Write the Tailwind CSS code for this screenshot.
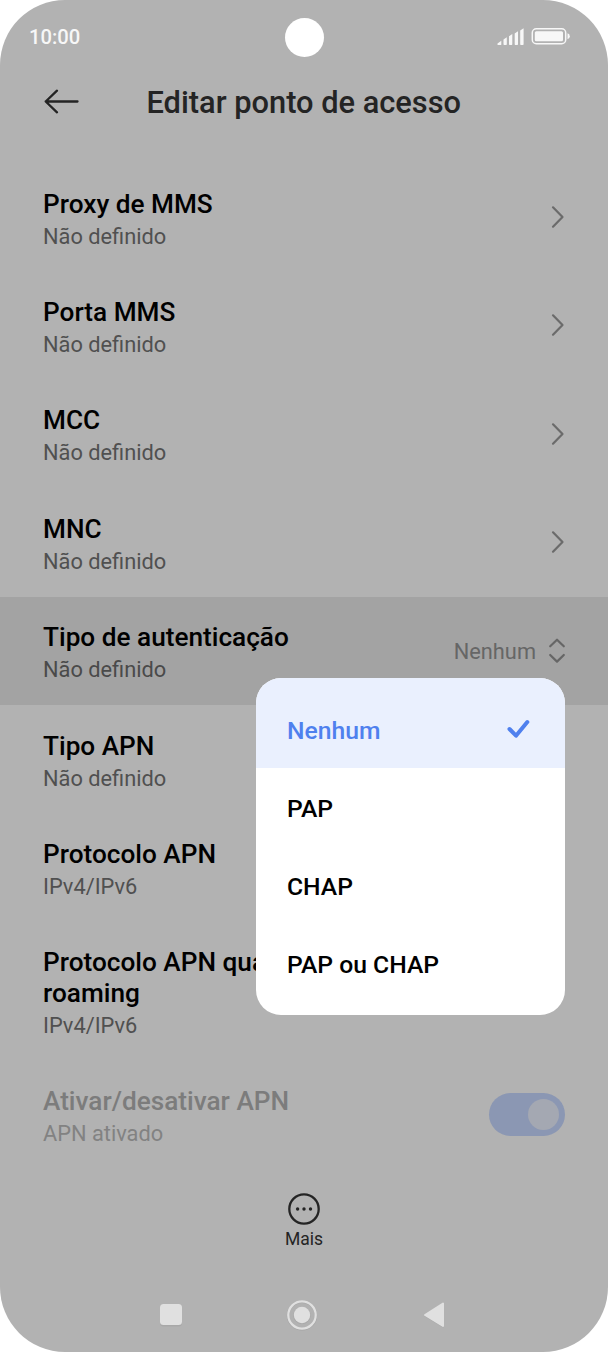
<!DOCTYPE html>
<html lang="pt">
<head>
<meta charset="utf-8">
<title>Editar ponto de acesso</title>
<script src="https://cdn.jsdelivr.net/npm/@tailwindcss/browser@4"></script>
</head>
<body class="bg-white font-[Roboto,sans-serif]">
<div class="relative flex h-[1352px] w-[608px] flex-col overflow-hidden rounded-[65px] bg-[#b2b2b2] text-black">

  <header class="flex h-[74px] shrink-0 items-center justify-between pl-[29px] pr-[37px]">
    <span class="w-[82px] text-[20.200px] leading-[24px] font-medium text-[#f7f7f7]">10:00</span>
    <span class="mr-[-1px] size-[39px] rounded-full bg-white"></span>
    <svg class="h-[18px] w-[74px]" viewBox="0 0 74 18" fill="#f7f7f7">
      <path d="M0.500 16.500V15.500L4.300 12.800V16.500Q4.300 17 3.800 17H1Q.5 17 .5 16.500ZM6.500 11.500L9.800 9.300V16.300Q9.800 17 9.100 17H7.200Q6.500 17 6.500 16.300ZM12 8.200L15.300 6V16.300Q15.300 17 14.600 17H12.700Q12 17 12 16.300ZM17.700 5.400L21 3.200V16.300Q21 17 20.300 17H18.400Q17.700 17 17.700 16.300ZM23.200 2.600L26.600.300V16.300Q26.600 17 25.900 17H23.900Q23.200 17 23.200 16.300Z"/>
      <rect x="35.300" y="0.800" width="33.400" height="14.900" rx="4" fill="none" stroke="#f7f7f7" stroke-width="1.500"/>
      <rect x="37.800" y="3.200" width="28.200" height="10" rx="1.500"/>
      <path d="M70.500 5.200Q72.800 5.500 72.800 8.200T70.500 11.200Z"/>
    </svg>
  </header>

  <div class="flex h-[89px] shrink-0 items-start pl-[44px]">
    <svg class="mt-[14px] h-[26px] w-[36px]" viewBox="0 0 36 26" fill="none" stroke="#242424" stroke-width="2.300" stroke-linecap="round" stroke-linejoin="round"><path d="M33.500 13.500H1.700M13 2.700L1.700 13.500L13 24.300"/></svg>
    <h1 class="ml-[66.500px] mt-[11px] text-[30.800px] leading-[36px] font-medium whitespace-nowrap text-[#242424]">Editar ponto de acesso</h1>
  </div>

  <main class="flex shrink-0 flex-col">
    <section class="flex h-[108.400px] justify-between pl-[43px] pr-[43px] pt-[25.600px]">
      <div><h2 class="text-[26.200px] leading-[31px] font-medium">Proxy de MMS</h2><p class="mt-[4px] text-[21.800px] leading-[26px] text-[#505050]">Não definido</p></div>
      <svg class="mt-[16.500px] h-[24px] w-[16px]" viewBox="0 0 16 24" fill="none" stroke="#6b6b6b" stroke-width="2.200" stroke-linecap="round" stroke-linejoin="round"><path d="M4 2.300L13.500 12L4 21.700"/></svg>
    </section>
    <section class="flex h-[108.400px] justify-between pl-[43px] pr-[43px] pt-[25.600px]">
      <div><h2 class="text-[26.200px] leading-[31px] font-medium">Porta MMS</h2><p class="mt-[4px] text-[21.800px] leading-[26px] text-[#505050]">Não definido</p></div>
      <svg class="mt-[16.500px] h-[24px] w-[16px]" viewBox="0 0 16 24" fill="none" stroke="#6b6b6b" stroke-width="2.200" stroke-linecap="round" stroke-linejoin="round"><path d="M4 2.300L13.500 12L4 21.700"/></svg>
    </section>
    <section class="flex h-[108.400px] justify-between pl-[43px] pr-[43px] pt-[25.600px]">
      <div><h2 class="text-[26.200px] leading-[31px] font-medium">MCC</h2><p class="mt-[4px] text-[21.800px] leading-[26px] text-[#505050]">Não definido</p></div>
      <svg class="mt-[16.500px] h-[24px] w-[16px]" viewBox="0 0 16 24" fill="none" stroke="#6b6b6b" stroke-width="2.200" stroke-linecap="round" stroke-linejoin="round"><path d="M4 2.300L13.500 12L4 21.700"/></svg>
    </section>
    <section class="flex h-[108.400px] justify-between pl-[43px] pr-[43px] pt-[25.600px]">
      <div><h2 class="text-[26.200px] leading-[31px] font-medium">MNC</h2><p class="mt-[4px] text-[21.800px] leading-[26px] text-[#505050]">Não definido</p></div>
      <svg class="mt-[16.500px] h-[24px] w-[16px]" viewBox="0 0 16 24" fill="none" stroke="#6b6b6b" stroke-width="2.200" stroke-linecap="round" stroke-linejoin="round"><path d="M4 2.300L13.500 12L4 21.700"/></svg>
    </section>
    <section class="flex h-[108.400px] justify-between bg-[#a3a3a3] pl-[43px] pr-[42px] pt-[25.600px]">
      <div><h2 class="text-[26.200px] leading-[31px] font-medium">Tipo de autenticação</h2><p class="mt-[4px] text-[21.800px] leading-[26px] text-[#4a4a4a]">Não definido</p></div>
      <div class="mt-[16px] flex h-[26px] items-center gap-[12px]">
        <span class="mt-[1.500px] text-[21.800px] leading-[26px] text-[#666666]">Nenhum</span>
        <svg class="h-[26px] w-[18px]" viewBox="0 0 18 26" fill="none" stroke="#666666" stroke-width="2.200" stroke-linecap="round" stroke-linejoin="round"><path d="M2.200 8.300L9 1.700L15.800 8.300M2.200 17L9 23.600L15.800 17"/></svg>
      </div>
    </section>
    <section class="h-[108.400px] pl-[43px] pt-[25.600px]">
      <h2 class="text-[26.200px] leading-[31px] font-medium">Tipo APN</h2><p class="mt-[4px] text-[21.800px] leading-[26px] text-[#505050]">Não definido</p>
    </section>
    <section class="h-[108.400px] pl-[43px] pt-[25.600px]">
      <h2 class="text-[26.200px] leading-[31px] font-medium">Protocolo APN</h2><p class="mt-[4px] text-[21.800px] leading-[26px] text-[#505050]">IPv4/IPv6</p>
    </section>
    <section class="h-[139.200px] pl-[43px] pt-[25.300px]">
      <h2 class="w-[222px] overflow-hidden text-[26.200px] leading-[31px] font-medium whitespace-nowrap">Protocolo APN qua<br>roaming</h2><p class="mt-[4px] text-[21.800px] leading-[26px] text-[#505050]">IPv4/IPv6</p>
    </section>
    <section class="flex h-[108.400px] justify-between pl-[43px] pr-[43px] pt-[25.300px]">
      <div><h2 class="text-[26.200px] leading-[31px] font-medium text-[#7c7c7c]">Ativar/desativar APN</h2><p class="mt-[4px] text-[21.800px] leading-[26px] text-[#828282]">APN ativado</p></div>
      <div class="mt-[7px] flex h-[43px] w-[76px] items-center justify-end rounded-full bg-[#8b97b3] pr-[6px]"><span class="size-[31px] rounded-full bg-[#a4a8b2]"></span></div>
    </section>
  </main>

  <div class="mt-[23px] flex shrink-0 flex-col items-center">
    <svg class="mr-[1px] size-[34px]" viewBox="0 0 34 34" fill="#242424"><circle cx="17" cy="17" r="14.700" fill="none" stroke="#242424" stroke-width="2.300"/><circle cx="10.600" cy="17" r="1.700"/><circle cx="17" cy="17" r="1.700"/><circle cx="23.500" cy="17" r="1.700"/></svg>
    <span class="mt-[2px] text-[17.500px] leading-[22px] text-[#242424]">Mais</span>
  </div>

  <nav class="mt-[48.500px] flex shrink-0 items-center justify-between pl-[159px] pr-[162px]">
    <svg class="size-[24px]" viewBox="0 0 24 24"><rect x="1" y="1.500" width="22" height="22" rx="3.500" fill="#a8a8a8"/><rect x="1" y="1" width="22" height="21" rx="3.500" fill="#e0e0e0"/></svg>
    <svg class="mr-[1px] size-[32px]" viewBox="0 0 32 32"><circle cx="16" cy="16.400" r="13.800" fill="none" stroke="#a4a4a4" stroke-width="2.700"/><circle cx="16" cy="16.400" r="8.700" fill="#a8a8a8"/><circle cx="16" cy="16" r="13.700" fill="none" stroke="#e0e0e0" stroke-width="2.300"/><circle cx="16" cy="16" r="8.200" fill="#e0e0e0"/></svg>
    <svg class="h-[28px] w-[24px]" viewBox="0 0 24 28" stroke-width="2" stroke-linejoin="round"><path d="M21 3V25.500L3 14.500Z" fill="#a8a8a8" stroke="#a8a8a8"/><path d="M21 2.500V25L3 14Z" fill="#e0e0e0" stroke="#e0e0e0"/></svg>
  </nav>

  <div class="absolute left-[256px] top-[677.500px] flex h-[337.500px] w-[309px] flex-col overflow-hidden rounded-[25px] bg-white text-[24.700px] leading-[30px] font-medium">
    <div class="flex h-[90.500px] shrink-0 items-start justify-between bg-[#eaf0fe] pl-[31px] pr-[33px] pt-[38px] text-[#4f80ee]">
      <span>Nenhum</span>
      <svg class="mt-[2px] h-[22px] w-[26px]" viewBox="0 0 26 22" fill="none" stroke="#4f80ee" stroke-width="4" stroke-linecap="round" stroke-linejoin="round"><path d="M3.500 11L10 17.700L21.300 4"/></svg>
    </div>
    <div class="h-[78px] shrink-0 pl-[31px] pt-[26px]">PAP</div>
    <div class="h-[78px] shrink-0 pl-[31px] pt-[26px]">CHAP</div>
    <div class="h-[91px] shrink-0 pl-[31px] pt-[26px]">PAP ou CHAP</div>
  </div>
</div>
</body>
</html>
